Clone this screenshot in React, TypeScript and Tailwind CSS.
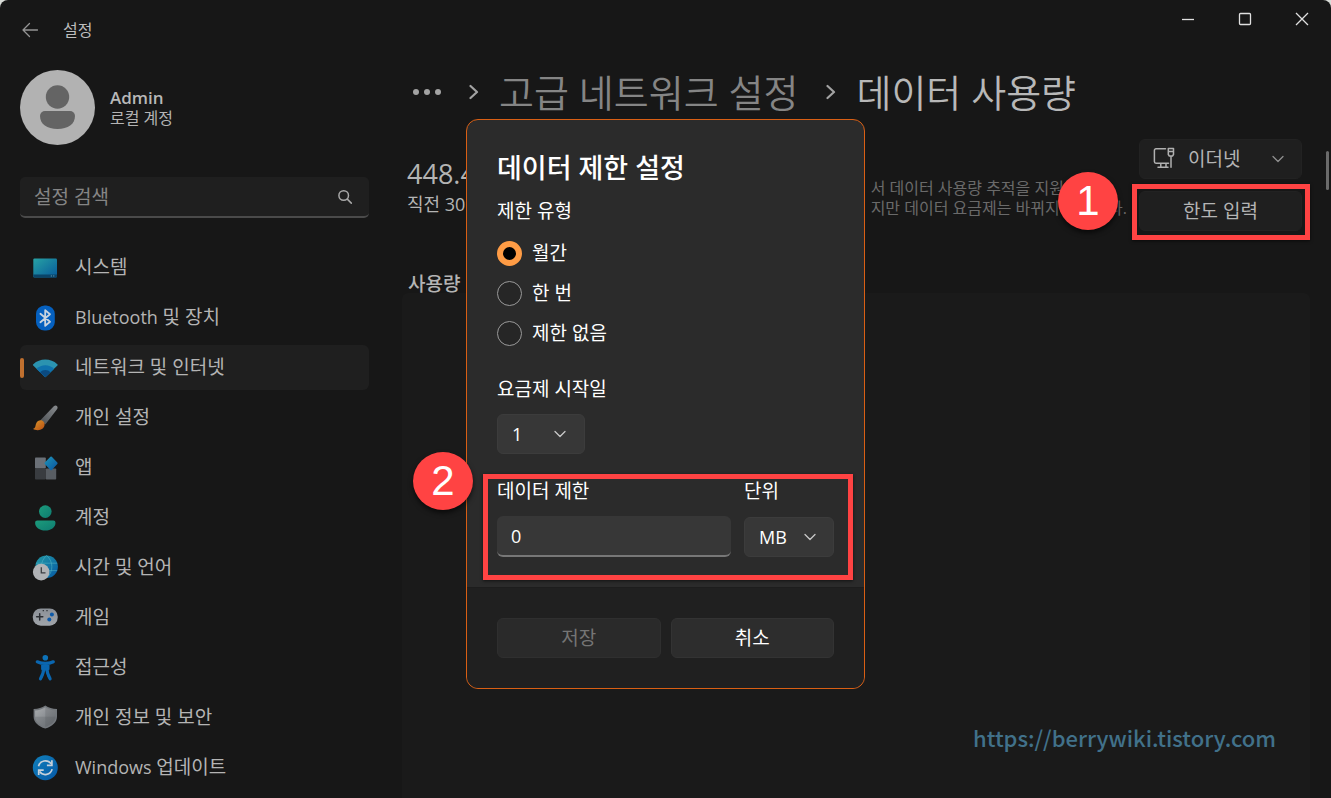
import React, { useState } from 'react';

type IconProps = { className?: string };

const SystemIcon = () => (
  <svg viewBox="0 0 26 26" className="size-[26px] shrink-0" aria-hidden="true">
    <defs>
      <linearGradient id="sys" x1="0" y1="0" x2="1" y2="1">
        <stop offset="0" stopColor="#27a2a4" />
        <stop offset="1" stopColor="#07599a" />
      </linearGradient>
    </defs>
    <rect x="1.3" y="3.5" width="23.7" height="19" rx="1.2" fill="url(#sys)" />
    <path d="M1.3 19.4H25v1.9a1.2 1.2 0 0 1-1.2 1.2H2.5a1.2 1.2 0 0 1-1.2-1.2z" fill="#0a4468" />
    <rect x="18.8" y="20.4" width="1.1" height="1.1" fill="#5e9cb8" />
    <rect x="21.2" y="20.4" width="1.1" height="1.1" fill="#5e9cb8" />
  </svg>
);

const BluetoothIcon = () => (
  <svg viewBox="0 0 26 26" className="size-[26px] shrink-0" aria-hidden="true">
    <rect x="4" y="0.5" width="18.8" height="25" rx="8.6" fill="#0560bf" />
    <path d="M8.4 8.8l9.6 8-4.8 4V5.200l4.800 4-9.600 8" fill="none" stroke="#c9d3de" strokeWidth="1.800" strokeLinejoin="round" strokeLinecap="round" />
  </svg>
);

const WifiIcon = () => (
  <svg viewBox="0 0 26 26" className="size-[26px] shrink-0" aria-hidden="true">
    <path d="M13.3 22.3L1.2 10.6a1 1 0 0 1 .1-1.4A18 18 0 0 1 13.3 4.6a18 18 0 0 1 12 4.6 1 1 0 0 1 .1 1.4z" fill="#2b93b0" />
    <path d="M13.3 22.3L4.6 13.9a12.4 12.4 0 0 1 17.4 0z" fill="#0f72ad" />
    <path d="M13.3 22.3L8 17.2a7.6 7.6 0 0 1 10.6 0z" fill="#0b4a80" />
  </svg>
);

const BrushIcon = () => (
  <svg viewBox="0 0 26 26" className="size-[26px] shrink-0" aria-hidden="true">
    <defs>
      <linearGradient id="brushHandle" x1="1" y1="0" x2="0" y2="1">
        <stop offset="0" stopColor="#8a8d90" />
        <stop offset="1" stopColor="#4a4e52" />
      </linearGradient>
      <linearGradient id="brushTip" x1="0" y1="0" x2="1" y2="1">
        <stop offset="0" stopColor="#d9972b" />
        <stop offset="1" stopColor="#b94e12" />
      </linearGradient>
    </defs>
    <path d="M8.400 15.200L21.800 1.300c1-.9 2.600-.9 3.300-.1.700.9.600 2.100-.1 3L13.300 19.600z" fill="url(#brushHandle)" />
    <path d="M7.500 15.400c2.800-.5 5.400 1.600 5.100 4.400-.3 3.300-3.400 5.500-7 5.400-1.800 0-3.500-.4-4.600-1.400 1.600-.3 2.200-1.200 2.500-3 .4-2.900 1.700-5 4-5.400z" fill="url(#brushTip)" />
  </svg>
);

const AppsIcon = () => (
  <svg viewBox="0 0 26 26" className="size-[26px] shrink-0" aria-hidden="true">
    <defs>
      <linearGradient id="appDiamond" x1="0" y1="0" x2="1" y2="1">
        <stop offset="0" stopColor="#1f96b8" />
        <stop offset="1" stopColor="#0a53a0" />
      </linearGradient>
    </defs>
    <rect x="3" y="2.500" width="10.800" height="11" rx="0.800" fill="#6b7077" />
    <rect x="3" y="13.500" width="10.800" height="11" rx="0.800" fill="#393c40" />
    <rect x="13.800" y="13.500" width="10.400" height="11" rx="0.800" fill="#585d63" />
    <path d="M18.400 1.800a1 1 0 0 1 1.400 0l5.500 5.800a1 1 0 0 1 0 1.400l-5.500 5.900a1 1 0 0 1-1.400 0l-5.600-5.900a1 1 0 0 1 0-1.400z" fill="url(#appDiamond)" />
  </svg>
);

const AccountIcon = () => (
  <svg viewBox="0 0 26 26" className="size-[26px] shrink-0" aria-hidden="true">
    <defs>
      <linearGradient id="acct" x1="0" y1="0" x2="1" y2="1">
        <stop offset="0" stopColor="#1c9c7c" />
        <stop offset="1" stopColor="#0e7b70" />
      </linearGradient>
    </defs>
    <circle cx="13.300" cy="6.600" r="6.300" fill="url(#acct)" />
    <path d="M5.300 15.400h16a2.200 2.200 0 0 1 2.200 2.300c0 4.800-4.600 7.800-10.200 7.800S3.100 22.500 3.100 17.700a2.200 2.200 0 0 1 2.200-2.300z" fill="url(#acct)" />
  </svg>
);

const TimeIcon = () => (
  <svg viewBox="0 0 26 26" className="size-[26px] shrink-0" aria-hidden="true">
    <defs>
      <linearGradient id="globe" x1="0" y1="0" x2="1" y2="1">
        <stop offset="0" stopColor="#229aa5" />
        <stop offset="1" stopColor="#0659a5" />
      </linearGradient>
    </defs>
    <circle cx="14.600" cy="11.700" r="11.300" fill="url(#globe)" />
    <path d="M4 8.200h21.200M4.500 15.600h20.700M14.600.5c-7 6-7 16.500 0 22.400M14.600.5c7 6 7 16.500 0 22.400" fill="none" stroke="#55b4c4" strokeWidth="0.700" opacity="0.800" />
    <circle cx="9.200" cy="17.100" r="8.300" fill="#b1b3b6" />
    <path d="M9.300 12.300v5.500h4.200" fill="none" stroke="#3c3f43" strokeWidth="1.300" />
  </svg>
);

const GameIcon = () => (
  <svg viewBox="0 0 26 26" className="size-[26px] shrink-0" aria-hidden="true">
    <defs>
      <linearGradient id="pad" x1="0" y1="0" x2="0" y2="1">
        <stop offset="0" stopColor="#8b9097" />
        <stop offset="1" stopColor="#a1a5aa" />
      </linearGradient>
    </defs>
    <rect x="0.800" y="3.500" width="24.900" height="17.200" rx="8" fill="url(#pad)" />
    <path d="M7.700 8.700v6.200M4.600 11.800h6.200" stroke="#2b2e33" strokeWidth="1.500" strokeLinecap="round" />
    <path d="M10.700 5.700h1.200M14.400 5.700h1.200" stroke="#2b2e33" strokeWidth="1.200" />
    <circle cx="19.900" cy="9.500" r="2" fill="#0d59a8" />
    <circle cx="17.300" cy="14.400" r="2" fill="#0d59a8" />
  </svg>
);

const AccessIcon = () => (
  <svg viewBox="0 0 26 26" className="size-[26px] shrink-0" aria-hidden="true">
    <circle cx="13.300" cy="2.800" r="2.800" fill="#0d72b8" />
    <path d="M5.300 6.800c2.500 1.200 5.200 1.700 8 1.700s5.500-.5 8-1.700M10.700 9.500h5.200v4.400h-5.200zM11.700 13.500c0 4-1.500 7.300-3.200 10.300M14.900 13.500c0 4 1.500 7.300 3.200 10.300" fill="#0a66b0" stroke="#0a66b0" strokeWidth="3.200" strokeLinecap="round" strokeLinejoin="round" />
    <path d="M13.300 17.500l-2.800 7.500h5.600z" fill="#171717" />
  </svg>
);

const ShieldIcon = () => (
  <svg viewBox="0 0 26 26" className="size-[26px] shrink-0" aria-hidden="true">
    <defs>
      <linearGradient id="shield" x1="0" y1="0" x2="1" y2="1">
        <stop offset="0" stopColor="#a9acaf" />
        <stop offset="1" stopColor="#6c7075" />
      </linearGradient>
    </defs>
    <path d="M13.300.6c3.300 2.300 7 3.400 11.700 3.500v7.300c0 5.600-4.500 9.700-11.700 12.200C6.100 21.100 1.600 17 1.600 11.400V4.100C6.300 4 10 2.900 13.300.6z" fill="#74787d" />
    <path d="M13.300 2.300c3 2 6.300 3 10.200 3.200v6.300c-.2 4.500-3.900 7.900-10.200 10.200C7 19.700 3.300 16.300 3.100 11.800V5.500c3.900-.2 7.200-1.200 10.200-3.200z" fill="url(#shield)" />
    <path d="M13.300 2.300c3 2 6.300 3 10.200 3.200v6.300c-.2 4.500-3.900 7.900-10.200 10.200z" fill="#54585c" opacity="0.250" />
    <path d="M3.100 11.800h20.400c-.2 4.500-3.900 7.900-10.200 10.200C7 19.700 3.300 16.300 3.100 11.800z" fill="#54585c" opacity="0.250" />
  </svg>
);

const UpdateIcon = () => (
  <svg viewBox="0 0 26 26" className="size-[26px] shrink-0" aria-hidden="true">
    <defs>
      <linearGradient id="upd" x1="0" y1="0" x2="1" y2="1">
        <stop offset="0" stopColor="#1180bb" />
        <stop offset="1" stopColor="#0558a6" />
      </linearGradient>
    </defs>
    <circle cx="13.300" cy="12.700" r="12.500" fill="url(#upd)" />
    <path d="M6.500 11.300a7 7 0 0 1 12.500-2.500M20.100 14.100a7 7 0 0 1-12.500 2.500" fill="none" stroke="#c6d0da" strokeWidth="1.700" />
    <path d="M19.900 5.300v5h-5M6.700 20.100v-5h5" fill="none" stroke="#c6d0da" strokeWidth="1.700" />
  </svg>
);

const ChevronDown = ({ className = '' }: IconProps) => (
  <svg viewBox="0 0 12 12" className={`pointer-events-none absolute size-3 ${className}`} fill="none" stroke="currentColor" strokeWidth="1.300" strokeLinecap="round" strokeLinejoin="round" aria-hidden="true">
    <path d="M1 3.500l5 5 5-5" />
  </svg>
);

const ChevronRight = () => (
  <svg viewBox="0 0 10 16" className="h-4 w-2.5 shrink-0" fill="none" stroke="#a3a3a3" strokeWidth="2.200" strokeLinecap="round" strokeLinejoin="round" aria-hidden="true">
    <path d="M1.500 2l6.500 6-6.500 6" />
  </svg>
);

const EthernetIcon = () => (
  <svg viewBox="0 0 22 22" className="pointer-events-none absolute top-2 left-3.5 size-[22px]" fill="none" stroke="#b0b0b0" strokeWidth="1.500" strokeLinejoin="round" strokeLinecap="round" aria-hidden="true">
    <path d="M12.500 1.800H3a1.600 1.600 0 0 0-1.600 1.600v11.200A1.600 1.600 0 0 0 3 16.200h12.500M7.800 16.500v3.500M13 16.500v3.500M5 20.200h10" />
    <path d="M15.300 1.500h5.200v6l-1 1.500h-3.200l-1-1.500zM15.500 4.500h5M18 9v11.200" />
  </svg>
);

const navItems = [
  { label: '시스템', Icon: SystemIcon },
  { latin: 'Bluetooth', label: '및 장치', Icon: BluetoothIcon },
  { label: '네트워크 및 인터넷', Icon: WifiIcon, active: true },
  { label: '개인 설정', Icon: BrushIcon },
  { label: '앱', Icon: AppsIcon },
  { label: '계정', Icon: AccountIcon },
  { label: '시간 및 언어', Icon: TimeIcon },
  { label: '게임', Icon: GameIcon },
  { label: '접근성', Icon: AccessIcon },
  { label: '개인 정보 및 보안', Icon: ShieldIcon },
  { latin: 'Windows', label: '업데이트', Icon: UpdateIcon },
];

const Badge = ({ value, className }: { value: number; className: string }) => (
  <span className={`absolute z-10 flex h-[58px] w-[60px] items-center justify-center rounded-[50%] bg-[#ff4343] font-['Liberation_Sans',sans-serif] text-[42px] leading-none text-white shadow-[0_3px_5px_rgba(0,0,0,0.6)] ${className}`}>
    {value}
  </span>
);

const Sidebar = () => (
  <aside className="mr-8 ml-5 flex w-[349px] shrink-0 flex-col">
    <div className="flex h-[60px] items-center gap-[23px]">
      <button aria-label="뒤로" className="flex h-6 w-5 items-center">
        <svg viewBox="0 0 18 16" className="ml-0.5 h-4 w-[18px]" fill="none" stroke="#949494" strokeWidth="1.300" strokeLinecap="round" strokeLinejoin="round" aria-hidden="true">
          <path d="M7.500 1.500L1 8l6.500 6.500M1 8h14.500" />
        </svg>
      </button>
      <span className="text-base text-[#bdbdbd]">설정</span>
    </div>
    <div className="mt-2.5 flex items-center gap-[15px]">
      <svg viewBox="0 0 75 75" className="size-[75px]" role="img" aria-label="사용자">
        <circle cx="37.500" cy="37.500" r="37.500" fill="#b2b2b2" />
        <circle cx="37.500" cy="27" r="11.700" fill="#646464" />
        <path d="M25 41h25a5 5 0 0 1 5 5c0 8-7 13-17.500 13S20 54 20 46a5 5 0 0 1 5-5z" fill="#646464" />
      </svg>
      <div>
        <p className="text-[17px] leading-5 font-semibold text-[#b8b8b8]">Admin</p>
        <p className="text-base leading-5 text-[#b4b4b4]">로컬 계정</p>
      </div>
    </div>
    <div className="relative mt-8 flex">
      <input
        type="search"
        aria-label="설정 검색"
        placeholder="설정 검색"
        className="h-[41px] w-full rounded-[5px] border-b-2 border-[#4a4a4a] bg-[#1f1f1f] px-3.5 text-[19px] text-[#b4b4b4] outline-none placeholder:text-[#858585]"
      />
      <svg viewBox="0 0 16 16" className="pointer-events-none absolute top-3 right-4 size-4" fill="none" stroke="#a8a8a8" strokeWidth="1.500" strokeLinecap="round" aria-hidden="true">
        <circle cx="6.700" cy="6.500" r="4.800" />
        <path d="M10.300 10.100l4 4" />
      </svg>
    </div>
    <nav className="mt-[27px]">
      <ul className="flex flex-col gap-[5px]">
        {navItems.map(({ latin, label, Icon, active }) => (
          <li key={label}>
            <a
              href="#"
              aria-current={active ? 'page' : undefined}
              className={`relative flex h-[45px] items-center gap-[17px] rounded-md pl-3 text-[19px] text-[#b4b4b4] ${active ? 'bg-[#1f1f1f]' : ''}`}
            >
              {active && <span className="absolute left-0 h-5 w-1 rounded-full bg-[#c0702f]" />}
              <Icon />
              <span>
                {latin && <span className="text-lg">{latin} </span>}
                {label}
              </span>
            </a>
          </li>
        ))}
      </ul>
    </nav>
  </aside>
);

const LimitDialog = () => {
  const [kind, setKind] = useState('월간');
  return (
    <div role="dialog" aria-labelledby="dlg-title" className="w-[399px] rounded-xl border border-[#d95f14] bg-[#2b2b2b] text-[19px] leading-7 text-white">
      <div className="p-[30px]">
        <h2 id="dlg-title" className="text-[27px] leading-9 font-medium">데이터 제한 설정</h2>
        <fieldset className="mt-[11px]">
          <legend>제한 유형</legend>
          <div className="mt-2">
            {['월간', '한 번', '제한 없음'].map((k) => (
              <label key={k} className="flex h-10 items-center gap-2.5">
                <input
                  type="radio"
                  name="kind"
                  checked={kind === k}
                  onChange={() => setKind(k)}
                  className="size-[25px] appearance-none rounded-full border border-[#9a9a9a] bg-[#262626] checked:border-[6px] checked:border-[#ff9c45] checked:bg-black"
                />
                {k}
              </label>
            ))}
          </div>
        </fieldset>
        <label htmlFor="start-day" className="mt-[22px] block">요금제 시작일</label>
        <div className="relative mt-[11px] w-[88px]">
          <select id="start-day" className="h-10 w-full appearance-none rounded-md border border-[#3c3c3c] bg-[#373737] px-3.5 text-lg font-medium outline-none">
            <option>1</option>
            <option>2</option>
          </select>
          <ChevronDown className="top-3.5 right-[19px] text-[#c8c8c8]" />
        </div>
        <div className="relative mt-[23px] flex items-end gap-[13px]">
          <div className="min-w-0 flex-1">
            <label htmlFor="limit" className="block">데이터 제한</label>
            <input
              id="limit"
              type="text"
              defaultValue="0"
              className="mt-[11px] block h-[41px] w-full rounded-md border-b-2 border-[#777777] bg-[#373737] px-3.5 text-lg outline-none"
            />
          </div>
          <div className="w-[90px]">
            <label htmlFor="unit" className="block">단위</label>
            <div className="relative mt-3">
              <select id="unit" className="block h-10 w-full appearance-none rounded-md border border-[#3c3c3c] bg-[#373737] px-3.5 text-lg font-medium outline-none">
                <option>MB</option>
                <option>GB</option>
              </select>
              <ChevronDown className="top-3.5 right-[18px] text-[#c8c8c8]" />
            </div>
          </div>
          <span className="pointer-events-none absolute -top-[3px] -right-[19px] -bottom-[23px] -left-3.5 border-5 border-[#ff4343] shadow-[0_1px_3px_rgba(0,0,0,0.6)]" />
          <Badge value={2} className="-top-[25px] -left-[84px]" />
        </div>
      </div>
      <div className="flex gap-2.5 rounded-b-xl border-t border-[#1d1d1d] bg-[#202020] p-[30px]">
        <button disabled className="h-10 flex-1 rounded-md border border-[#2f2f2f] bg-[#2a2a2a] text-[#757575]">저장</button>
        <button className="h-10 flex-1 rounded-md border border-[#333333] bg-[#2d2d2d]">취소</button>
      </div>
    </div>
  );
};

export default function App() {
  return (
    <div className="h-screen bg-[#d9dcd8] font-['Open_Sans','Noto_Sans_CJK_KR',sans-serif]">
      <div className="relative flex h-full overflow-hidden rounded-t-lg bg-[#171717]">
        <Sidebar />
        <main className="flex min-w-0 flex-1 flex-col">
          <div className="flex h-[38px] items-center justify-end pr-px text-[#e0e0e0]">
            <button aria-label="최소화" className="flex w-[57px] justify-center">
              <svg viewBox="0 0 14 14" className="size-3.5" stroke="currentColor" strokeWidth="1.300"><path d="M1 7.500h12" /></svg>
            </button>
            <button aria-label="최대화" className="flex w-[57px] justify-center">
              <svg viewBox="0 0 14 14" className="size-3.5" fill="none" stroke="currentColor" strokeWidth="1.300"><rect x="1.500" y="1.500" width="11" height="11" rx="1" /></svg>
            </button>
            <button aria-label="닫기" className="flex w-[57px] justify-center">
              <svg viewBox="0 0 14 14" className="size-3.5" stroke="currentColor" strokeWidth="1.300"><path d="M1 1l12 12M13 1L1 13" /></svg>
            </button>
          </div>
          <nav aria-label="탐색 경로" className="mt-[26px] flex h-14 items-center pl-3 text-[38px] leading-none whitespace-nowrap">
            <button aria-label="더 보기" className="mr-7 flex gap-[5px]">
              <span className="size-1.5 rounded-full bg-[#a3a3a3]" />
              <span className="size-1.5 rounded-full bg-[#a3a3a3]" />
              <span className="size-1.5 rounded-full bg-[#a3a3a3]" />
            </button>
            <ChevronRight />
            <a href="#" className="mr-7 ml-5 font-[350] text-[#858585]">고급 네트워크 설정</a>
            <ChevronRight />
            <h1 className="ml-5 font-[350] text-[#b8b8b8]">데이터 사용량</h1>
          </nav>
          <div className="mt-[19px] flex h-[92px] items-start justify-between pr-[29px] pl-1.5">
            <div className="mt-[19px] text-[#b4b4b4]">
              <p className="text-[27px] leading-8 font-medium">448.4</p>
              <p className="text-lg leading-7">직전 30</p>
            </div>
            <div className="flex gap-3">
              <p className="mt-[39px] text-base leading-5 whitespace-nowrap text-[#6a6a6a]">
                서 데이터 사용량 추적을 지원하는<br />지만 데이터 요금제는 바뀌지 않습니다.
              </p>
              <div className="flex w-[163px] flex-col gap-3 text-[19px] text-[#b4b4b4]">
                <div className="relative">
                  <EthernetIcon />
                  <select aria-label="네트워크" className="block h-10 w-full appearance-none rounded-md border border-[#222222] bg-[#1f1f1f] pl-12 outline-none">
                    <option>이더넷</option>
                  </select>
                  <ChevronDown className="top-3.5 right-[18px] text-[#8f8f8f]" />
                </div>
                <div className="relative">
                  <button className="h-10 w-full rounded-md border border-[#222222] bg-[#1f1f1f]">한도 입력</button>
                  <span className="pointer-events-none absolute -top-[7px] -right-2 -bottom-[9px] -left-[7px] border-5 border-[#ff4343] shadow-[0_1px_3px_rgba(0,0,0,0.6)]" />
                  <Badge value={1} className="-top-[19px] -left-[81px]" />
                </div>
              </div>
            </div>
          </div>
          <h2 className="mt-10 pl-[7px] text-[19px] leading-[26px] font-medium text-[#b4b4b4]">사용량</h2>
          <section className="-mt-1 mr-[21px] ml-px flex flex-1 items-end justify-end rounded-t-md bg-[#1a1a1a] pr-[34px] pb-[45px]">
            <a href="https://berrywiki.tistory.com" className="font-['Noto_Sans_CJK_KR',sans-serif] text-[22px] leading-8 font-medium text-[#41718a]">https://berrywiki.tistory.com</a>
          </section>
        </main>
        <span className="absolute top-[151px] right-0.5 h-[39px] w-[3px] rounded-full bg-[#6b6b6b]" />
        <div className="pointer-events-none absolute inset-0 flex items-center justify-center pt-2.5">
          <div className="pointer-events-auto">
            <LimitDialog />
          </div>
        </div>
      </div>
    </div>
  );
}
